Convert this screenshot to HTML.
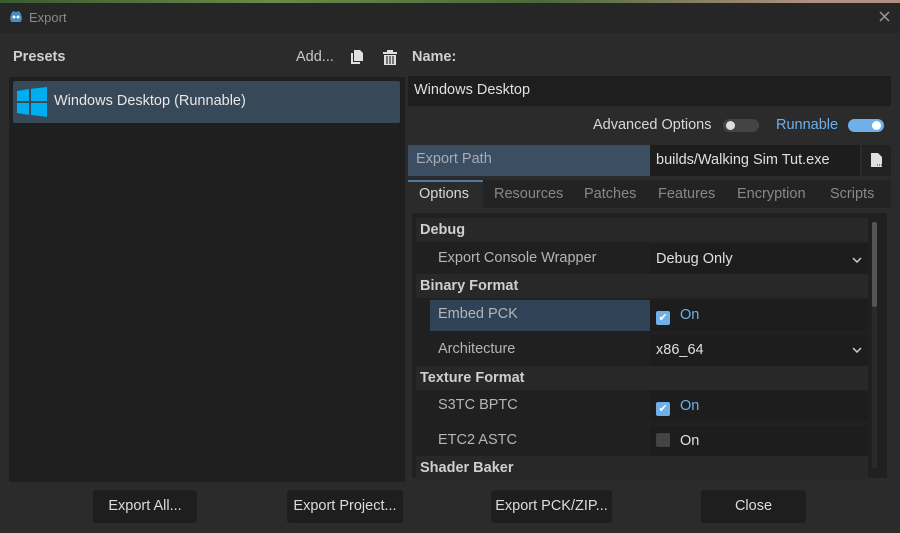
<!DOCTYPE html>
<html><head><style>
*{margin:0;padding:0;box-sizing:border-box}
body{width:900px;height:533px;background:#2b2b2b;font-family:"Liberation Sans","DejaVu Sans",sans-serif;font-size:14.5px;color:#dcdcdc;position:relative;overflow:hidden}
.a{position:absolute}
.t{position:absolute;white-space:nowrap}
.b{font-weight:bold;color:#d0d0d0}
.btn{position:absolute;top:490px;height:33px;background:#1e1e1e;border-radius:3px;text-align:center;line-height:33px;color:#dcdcdc}
.sec{position:absolute;left:416px;width:452px;height:24px;background:#282828;font-weight:bold;color:#cfcfcf;padding-left:4px;line-height:24px}
.lab{position:absolute;left:438px;color:#b5b5b5}
.val{position:absolute;left:650px;width:218px;background:#1d1d1d;padding-left:6px;color:#e0e0e0}
.cb{display:inline-block;width:14px;height:14px;border-radius:2px;vertical-align:-2px;margin-right:10px}
.chev{position:absolute;right:6px;top:50%;margin-top:-3px}
</style></head><body>
<div class="a" style="left:0;top:0;width:900px;height:3px;background:linear-gradient(90deg,#3a5a30,#6a8a4a 30%,#4a6a3a 60%,#b09080 90%)"></div>
<div class="a" style="left:0;top:3px;width:900px;height:30px;background:#262626"></div>
<svg class="a" style="left:9px;top:10px" width="14" height="14" viewBox="0 0 14 14"><path d="M2 4 L4 1 L7 2 L10 1 L12 4 L13 8 L12 12 L2 12 L1 8Z" fill="#478cbf"/><circle cx="5" cy="7" r="1.5" fill="#fff"/><circle cx="9" cy="7" r="1.5" fill="#fff"/></svg>
<div class="t" style="left:29px;top:10px;font-size:13px;color:#8a8a8a">Export</div>
<svg class="a" style="left:879px;top:11px" width="11" height="11" viewBox="0 0 11 11"><path d="M1 1L10 10M10 1L1 10" stroke="#9a9a9a" stroke-width="1.5"/></svg>

<div class="t b" style="left:13px;top:49px">Presets</div>
<div class="t" style="left:296px;top:49px;color:#c8c8c8">Add...</div>
<svg class="a" style="left:351px;top:50px" width="13" height="14" viewBox="0 0 13 14"><path d="M3 0h6l3 3v8H3z M0 3h2v9h7v2H0z" fill="#e0e0e0"/></svg>
<svg class="a" style="left:383px;top:50px" width="14" height="15" viewBox="0 0 14 15"><path d="M0 2h14v2H0z M4 0h6v2H4z M1 5h12v10H1z" fill="#e0e0e0"/><path d="M4 6v8M7 6v8M10 6v8" stroke="#2b2b2b" stroke-width="1.2"/></svg>
<div class="a" style="left:9px;top:77px;width:396px;height:405px;background:#1f1f1f"></div>
<div class="a" style="left:13px;top:81px;width:387px;height:42px;background:#374859;border-radius:2px"></div>
<svg class="a" style="left:17px;top:87px" width="30" height="30" viewBox="0 0 30 30"><path d="M0 4l12-2v12H0zM14 1.7L30 0v14H14zM0 16h12v12L0 26zM14 16h16v14l-16-2z" fill="#00adef"/></svg>
<div class="t" style="left:54px;top:93px;color:#e8e8e8">Windows Desktop (Runnable)</div>

<div class="t b" style="left:412px;top:49px">Name:</div>
<div class="a" style="left:408px;top:76px;width:483px;height:30px;background:#1e1e1e"></div>
<div class="t" style="left:414px;top:82px;color:#e0e0e0">Windows Desktop</div>
<div class="t" style="left:593px;top:117px;color:#d8d8d8">Advanced Options</div>
<div class="a" style="left:723px;top:119px;width:36px;height:13px;border-radius:7px;background:#444"><div class="a" style="left:3px;top:2px;width:9px;height:9px;border-radius:50%;background:#ddd"></div></div>
<div class="t" style="left:776px;top:117px;color:#6fb0ea">Runnable</div>
<div class="a" style="left:848px;top:119px;width:36px;height:13px;border-radius:7px;background:#6fb0ea"><div class="a" style="left:24px;top:2px;width:9px;height:9px;border-radius:50%;background:#fff"></div></div>

<div class="a" style="left:408px;top:145px;width:242px;height:31px;background:#3c4f62"></div>
<div class="t" style="left:416px;top:151px;color:#a5acb5">Export Path</div>
<div class="a" style="left:650px;top:145px;width:210px;height:31px;background:#1d1d1d"></div>
<div class="t" style="left:656px;top:152px;color:#e0e0e0">builds/Walking Sim Tut.exe</div>
<div class="a" style="left:862px;top:145px;width:29px;height:31px;background:#222"></div>
<svg class="a" style="left:871px;top:153px" width="12" height="14" viewBox="0 0 12 14"><path d="M0 0h7l4 4v10H0z" fill="#e0e0e0"/><path d="M6 12h1M8 12h1M10 12h1" stroke="#222"/></svg>

<div class="a" style="left:408px;top:180px;width:483px;height:28px;background:#232323"></div>
<div class="a" style="left:408px;top:180px;width:75px;height:28px;background:#2b2b2b;border-top:2px solid #4d7ba3"></div>
<div class="t" style="left:419px;top:186px;color:#d8d8d8">Options</div>
<div class="t" style="left:494px;top:186px;color:#888">Resources</div>
<div class="t" style="left:584px;top:186px;color:#888">Patches</div>
<div class="t" style="left:658px;top:186px;color:#888">Features</div>
<div class="t" style="left:737px;top:186px;color:#888">Encryption</div>
<div class="t" style="left:830px;top:186px;color:#888">Scripts</div>

<div class="a" style="left:412px;top:213px;width:475px;height:265px;background:#202020"></div>
<div class="a" style="left:872px;top:222px;width:5px;height:246px;background:#2a2a2a;border-radius:2px"><div class="a" style="left:0;top:0;width:5px;height:85px;background:#555;border-radius:2px"></div></div>

<div class="sec" style="top:218px">Debug</div>
<div class="lab" style="top:250px">Export Console Wrapper</div>
<div class="val" style="top:244px;height:31px;line-height:31px">Debug Only<svg class="chev" width="10" height="6" viewBox="0 0 10 6"><path d="M1 1L5 5L9 1" stroke="#ccc" stroke-width="1.5" fill="none"/></svg></div>
<div class="sec" style="top:274px">Binary Format</div>
<div class="a" style="left:430px;top:300px;width:220px;height:31px;background:#2f4256"></div>
<div class="lab" style="top:306px">Embed PCK</div>
<div class="val" style="top:300px;height:31px;line-height:31px"><span class="cb" style="background:#6fb0ea;color:#fff;font-size:11px;text-align:center;line-height:14px">✔</span><span style="color:#6fb0ea">On</span></div>
<div class="lab" style="top:341px">Architecture</div>
<div class="val" style="top:335px;height:30px;line-height:30px">x86_64<svg class="chev" width="10" height="6" viewBox="0 0 10 6"><path d="M1 1L5 5L9 1" stroke="#ccc" stroke-width="1.5" fill="none"/></svg></div>
<div class="sec" style="top:366px">Texture Format</div>
<div class="lab" style="top:397px">S3TC BPTC</div>
<div class="val" style="top:391px;height:30px;line-height:30px"><span class="cb" style="background:#6fb0ea;color:#fff;font-size:11px;text-align:center;line-height:14px">✔</span><span style="color:#6fb0ea">On</span></div>
<div class="lab" style="top:432px">ETC2 ASTC</div>
<div class="val" style="top:426px;height:30px;line-height:30px"><span class="cb" style="background:#444"></span>On</div>
<div class="sec" style="top:456px">Shader Baker</div>

<div class="btn" style="left:93px;width:104px">Export All...</div>
<div class="btn" style="left:287px;width:116px">Export Project...</div>
<div class="btn" style="left:491px;width:121px">Export PCK/ZIP...</div>
<div class="btn" style="left:701px;width:105px">Close</div>
</body></html>
